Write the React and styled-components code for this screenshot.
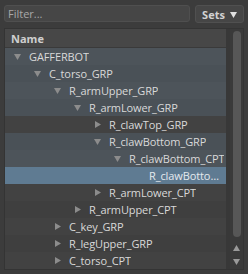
import React from 'react'
import styled, { createGlobalStyle } from 'styled-components'

const Global = createGlobalStyle`
  html, body {
    margin: 0;
    padding: 0;
    background: #3c3c3c;
    font-family: "Open Sans", "DejaVu Sans", sans-serif;
    font-size: 11px;
    color: #d9d9d9;
  }
`

const Page = styled.div`
  width: 248px;
  height: 274px;
  padding: 5px 4px 0 4px;
  box-sizing: border-box;
  display: flex;
  flex-direction: column;
  gap: 5px;
`

const Toolbar = styled.div`
  display: flex;
  gap: 5px;
  height: 18px;
`

const FilterInput = styled.input`
  flex: 1;
  min-width: 0;
  box-sizing: border-box;
  height: 17px;
  background: #464646;
  border: 1px solid #4f4f4f;
  border-radius: 3px;
  color: #d9d9d9;
  font: inherit;
  padding: 0 3px;
  outline: none;
  &::placeholder {
    color: #a8a8a8;
  }
`

const SetsButton = styled.button`
  width: 49px;
  height: 18px;
  box-sizing: border-box;
  background: #464646;
  border: 1px solid #505050;
  border-radius: 3px;
  color: #d2d2d2;
  font: inherit;
  font-weight: bold;
  display: flex;
  align-items: center;
  justify-content: center;
  gap: 5px;
  padding: 0;
`

const Panel = styled.div`
  flex: 1;
  margin-bottom: 4px;
  display: flex;
  border: 1px solid #343434;
  background: #3e3e3e;
  min-height: 0;
`

const Tree = styled.div`
  flex: 1;
  min-width: 0;
  display: flex;
  flex-direction: column;
  overflow: hidden;
  border-right: 4px solid #383838;
`

const Header = styled.div`
  height: 18px;
  flex-shrink: 0;
  background: #474747;
  border-bottom: 1px solid #3a3a3a;
  font-weight: bold;
  color: #cfcfcf;
  display: flex;
  align-items: center;
  padding-left: 6px;
`

const Row = styled.div`
  height: 17px;
  flex-shrink: 0;
  display: flex;
  align-items: center;
  padding-left: ${(p) => 9 + p.depth * 20}px;
  background: ${(p) =>
    p.selected ? '#5f7b92' : p.ancestor ? (p.odd ? '#4a5157' : '#4d545a') : p.odd ? '#3f3f3f' : '#424242'};
  color: ${(p) => (p.selected ? '#e4e9ee' : '#d9d9d9')};
  white-space: nowrap;
`

const Arrow = styled.span`
  width: 15px;
  flex-shrink: 0;
  display: flex;
  align-items: center;
  color: #8c8c8c;
`

const Label = styled.span`
  min-width: 0;
  overflow: hidden;
  text-overflow: ellipsis;
  letter-spacing: -0.1px;
`

const ScrollBar = styled.div`
  width: 13px;
  flex-shrink: 0;
  display: flex;
  flex-direction: column;
  align-items: center;
  background: #3a3a3a;
  padding-top: 2px;
`

const Handle = styled.div`
  width: 8px;
  height: 206px;
  border-radius: 4px;
  background: #575757;
`

const ScrollArrows = styled.div`
  margin-top: auto;
  display: flex;
  flex-direction: column;
  gap: 6px;
  padding-bottom: 4px;
`

const Tri = ({ dir, size = 7, color = '#8c8c8c' }) => {
  const pts = dir === 'down' ? '0,1 7,1 3.5,7' : dir === 'up' ? '0,6 7,6 3.5,0' : '1,0 7,3.5 1,7'
  return (
    <svg width={size} height={size} viewBox="0 0 7 7">
      <polygon points={pts} fill={color} />
    </svg>
  )
}

const rows = [
  { name: 'GAFFERBOT', depth: 0, arrow: 'down', ancestor: true },
  { name: 'C_torso_GRP', depth: 1, arrow: 'down', ancestor: true },
  { name: 'R_armUpper_GRP', depth: 2, arrow: 'down', ancestor: true },
  { name: 'R_armLower_GRP', depth: 3, arrow: 'down', ancestor: true },
  { name: 'R_clawTop_GRP', depth: 4, arrow: 'right' },
  { name: 'R_clawBottom_GRP', depth: 4, arrow: 'down', ancestor: true },
  { name: 'R_clawBottom_CPT', depth: 5, arrow: 'down', ancestor: true },
  { name: 'R_clawBottom_CPT_geo', depth: 6, selected: true },
  { name: 'R_armLower_CPT', depth: 4, arrow: 'right' },
  { name: 'R_armUpper_CPT', depth: 3, arrow: 'right' },
  { name: 'C_key_GRP', depth: 2, arrow: 'right' },
  { name: 'R_legUpper_GRP', depth: 2, arrow: 'right' },
  { name: 'C_torso_CPT', depth: 2, arrow: 'right' },
]

export default function App() {
  return (
    <>
      <Global />
      <Page>
        <Toolbar>
          <FilterInput placeholder="Filter..." />
          <SetsButton>
            Sets <Tri dir="down" size={7} color="#e0e0e0" />
          </SetsButton>
        </Toolbar>
        <Panel>
          <Tree>
            <Header>Name</Header>
            {rows.map((r, i) => (
              <Row key={r.name} depth={r.depth} selected={r.selected} ancestor={r.ancestor} odd={i % 2 === 1}>
                <Arrow>{r.arrow && <Tri dir={r.arrow} />}</Arrow>
                <Label>{r.name}</Label>
              </Row>
            ))}
          </Tree>
          <ScrollBar>
            <Handle />
            <ScrollArrows>
              <Tri dir="up" color="#9a9a9a" />
              <Tri dir="down" color="#9a9a9a" />
            </ScrollArrows>
          </ScrollBar>
        </Panel>
      </Page>
    </>
  )
}
